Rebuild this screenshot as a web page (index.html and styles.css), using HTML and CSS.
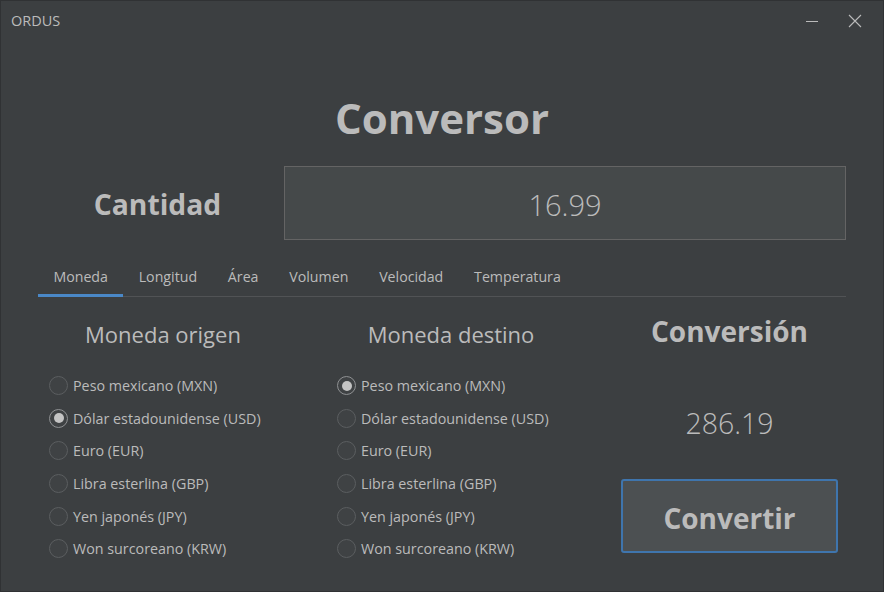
FILE: index.html
```html
<!DOCTYPE html>
<html lang="es">
<head>
<meta charset="utf-8">
<title>ORDUS</title>
<link rel="stylesheet" href="styles.css">
</head>
<body>
<div class="window">
  <div class="titlebar">
    <span class="app-name">ORDUS</span>
    <div class="win-controls">
      <span class="win-btn">
        <svg width="14" height="14" viewBox="0 0 14 14"><line x1="1" y1="7.5" x2="13" y2="7.5" stroke="#bbbbbb" stroke-width="1"/></svg>
      </span>
      <span class="win-btn">
        <svg width="14" height="14" viewBox="0 0 14 14"><path d="M1 1 L13 13 M13 1 L1 13" stroke="#bbbbbb" stroke-width="1.1" fill="none"/></svg>
      </span>
    </div>
  </div>

  <main class="content">
    <h1 class="title">Conversor</h1>

    <div class="amount-row">
      <label class="amount-label">Cantidad</label>
      <div class="amount-input">16.99</div>
    </div>

    <nav class="tabs">
      <span class="tab active">Moneda</span>
      <span class="tab">Longitud</span>
      <span class="tab">Área</span>
      <span class="tab">Volumen</span>
      <span class="tab">Velocidad</span>
      <span class="tab">Temperatura</span>
    </nav>

    <section class="panel">
      <div class="col">
        <h2 class="col-title">Moneda origen</h2>
        <ul class="radios">
          <li><span class="radio"></span>Peso mexicano (MXN)</li>
          <li><span class="radio checked"></span>Dólar estadounidense (USD)</li>
          <li><span class="radio"></span>Euro (EUR)</li>
          <li><span class="radio"></span>Libra esterlina (GBP)</li>
          <li><span class="radio"></span>Yen japonés (JPY)</li>
          <li><span class="radio"></span>Won surcoreano (KRW)</li>
        </ul>
      </div>
      <div class="col">
        <h2 class="col-title">Moneda destino</h2>
        <ul class="radios">
          <li><span class="radio checked"></span>Peso mexicano (MXN)</li>
          <li><span class="radio"></span>Dólar estadounidense (USD)</li>
          <li><span class="radio"></span>Euro (EUR)</li>
          <li><span class="radio"></span>Libra esterlina (GBP)</li>
          <li><span class="radio"></span>Yen japonés (JPY)</li>
          <li><span class="radio"></span>Won surcoreano (KRW)</li>
        </ul>
      </div>
      <div class="col result">
        <h2 class="result-title">Conversión</h2>
        <div class="result-value">286.19</div>
        <button class="convert-btn">Convertir</button>
      </div>
    </section>
  </main>
</div>
</body>
</html>
```

FILE: styles.css
```css
* { box-sizing: border-box; }

html, body {
  margin: 0;
  padding: 0;
  background: #3c3f41;
}

body {
  font-family: "Open Sans", "Noto Sans", sans-serif;
  color: #bbbbbb;
}

.window {
  width: 884px;
  height: 592px;
  background: #3c3f41;
  border: 1px solid #303234;
  overflow: hidden;
}

.titlebar {
  height: 39px;
  display: flex;
  align-items: center;
  justify-content: space-between;
  padding-left: 10px;
}

.app-name {
  font-size: 14.5px;
  color: #bbbbbb;
}

.win-controls {
  display: flex;
  gap: 29px;
  padding-right: 21px;
  padding-top: 1px;
}

.win-btn {
  width: 14px;
  height: 14px;
  display: flex;
}

.content {
  padding: 0 37px;
}

.title {
  margin: 50px 0 0;
  text-align: center;
  font-size: 42px;
  line-height: 56px;
  font-weight: 700;
  color: #bbbbbb;
}

.amount-row {
  display: grid;
  grid-template-columns: 239px 1fr;
  gap: 7px;
  margin-top: 20px;
  height: 74px;
}

.amount-label {
  display: flex;
  align-items: center;
  justify-content: center;
  font-size: 28.3px;
  font-weight: 700;
  padding-top: 2px;
}

.amount-input {
  background: #45494a;
  border: 1px solid #646464;
  display: flex;
  align-items: center;
  justify-content: center;
  font-size: 29px;
  font-weight: 300;
  color: #bbbbbb;
  padding-top: 2px;
}

.tabs {
  margin-top: 18px;
  height: 39px;
  display: flex;
  border-bottom: 1px solid #515355;
}

.tab {
  padding: 9px 15.4px 0;
  font-size: 14.2px;
  line-height: 20px;
  color: #bbbbbb;
}

.tab.active {
  border-bottom: 3px solid #4a88c7;
  margin-bottom: -1px;
}

.panel {
  display: grid;
  grid-template-columns: 250px 250px 224px;
  column-gap: 38px;
}

.panel .result {
  padding-left: 7px;
}

.col-title {
  margin: 22px 0 0;
  text-align: center;
  font-size: 22px;
  line-height: 30px;
  font-weight: 400;
  color: #bbbbbb;
}

.radios {
  list-style: none;
  margin: 20.5px 0 0;
  padding: 0 0 0 11px;
}

.radios li {
  height: 32.6px;
  display: flex;
  align-items: center;
  font-size: 14.3px;
  color: #bbbbbb;
}

.radio {
  width: 19px;
  height: 19px;
  border-radius: 50%;
  border: 1.5px solid #5b5e60;
  background: #3f4244;
  margin-right: 5px;
  flex: none;
  display: flex;
  align-items: center;
  justify-content: center;
}

.radio.checked {
  border-color: #8f9193;
}

.radio.checked::after {
  content: "";
  width: 10px;
  height: 10px;
  border-radius: 50%;
  background: #c4c4c4;
}

.result {
  display: flex;
  flex-direction: column;
  align-items: center;
}

.result-title {
  margin: 16px 0 0;
  font-size: 28px;
  line-height: 36px;
  font-weight: 700;
  color: #bbbbbb;
}

.result-value {
  margin-top: 55px;
  font-size: 28.5px;
  line-height: 38px;
  font-weight: 300;
  color: #bbbbbb;
}

.convert-btn {
  margin-top: 37px;
  width: 217px;
  height: 74px;
  background: #4c5052;
  border: 2px solid #3f75ad;
  border-radius: 3px;
  font-family: "Open Sans", "Noto Sans", sans-serif;
  font-size: 28px;
  font-weight: 700;
  color: #bbbbbb;
  padding: 4px 0 0;
}
```
